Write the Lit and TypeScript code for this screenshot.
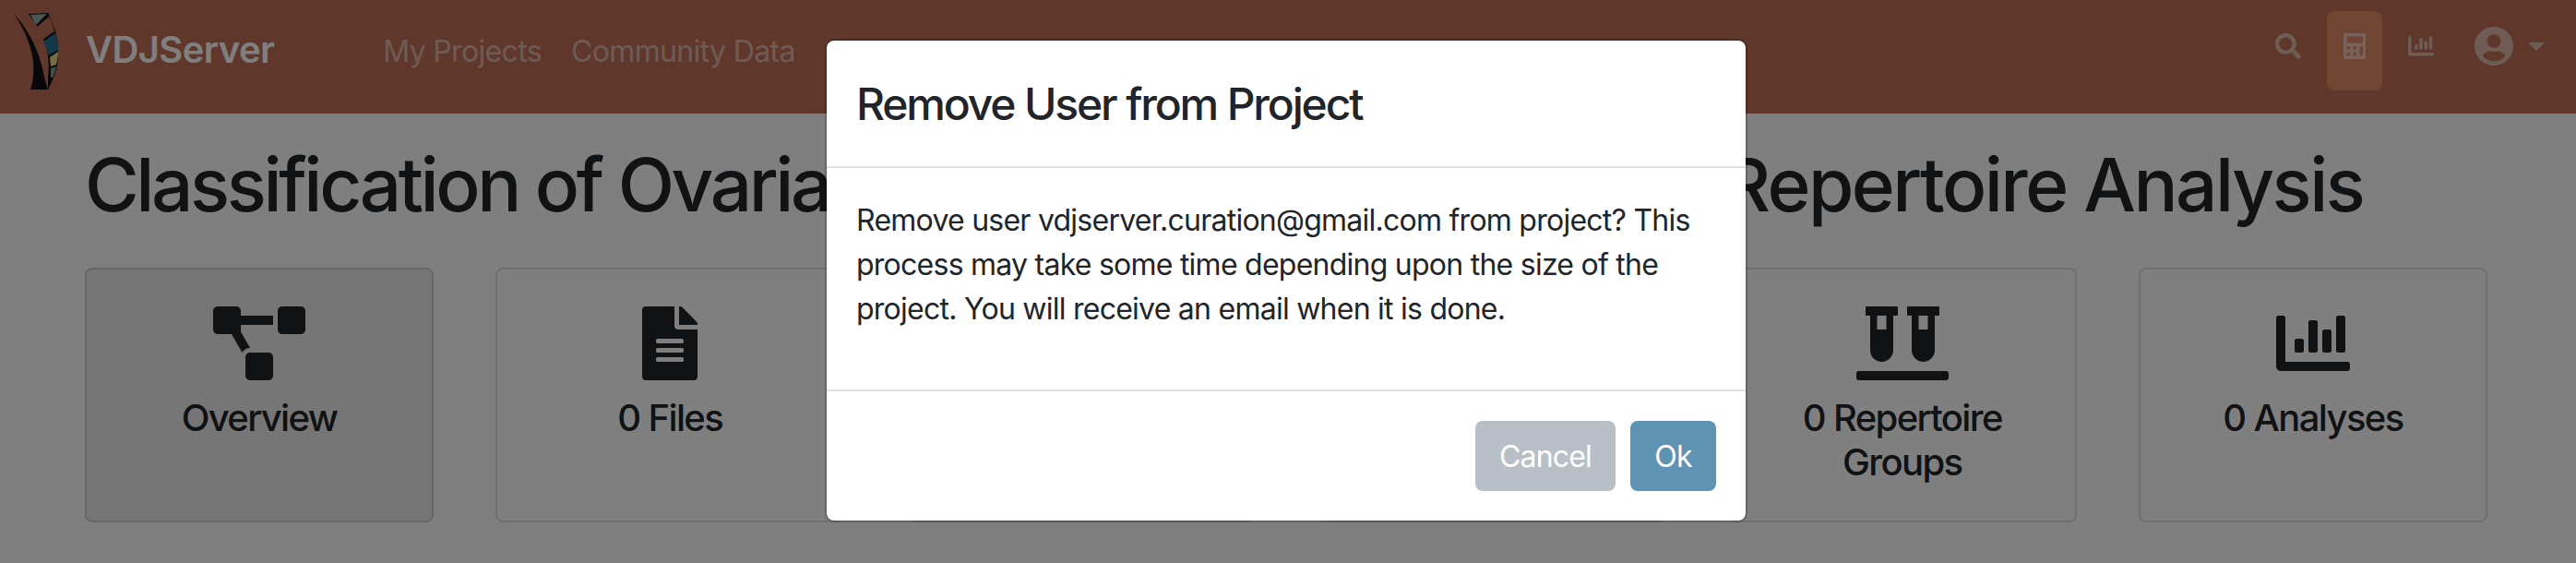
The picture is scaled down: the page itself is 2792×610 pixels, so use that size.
import { LitElement, css, html, svg } from "lit";
import { customElement } from "lit/decorators.js";

const icons = {
    search: ["0 0 512 512", "M505 442.7L405.3 343c-4.5-4.5-10.6-7-17-7H372c27.6-35.3 44-79.7 44-128C416 93.1 322.9 0 208 0S0 93.1 0 208s93.1 208 208 208c48.3 0 92.7-16.4 128-44v16.3c0 6.4 2.5 12.5 7 17l99.7 99.7c9.4 9.4 24.6 9.4 33.9 0l28.3-28.3c9.4-9.4 9.4-24.6.1-34zM208 336c-70.7 0-128-57.2-128-128 0-70.7 57.2-128 128-128 70.7 0 128 57.2 128 128 0 70.7-57.2 128-128 128z"],
    calculator: ["0 0 448 512", "M400 0H48C22.4 0 0 22.4 0 48v416c0 25.6 22.4 48 48 48h352c25.6 0 48-22.4 48-48V48c0-25.6-22.4-48-48-48zM128 435.2c0 6.4-6.4 12.8-12.8 12.8H76.8c-6.4 0-12.8-6.4-12.8-12.8v-38.4c0-6.4 6.4-12.8 12.8-12.8h38.4c6.4 0 12.8 6.4 12.8 12.8v38.4zm0-128c0 6.4-6.4 12.8-12.8 12.8H76.8c-6.4 0-12.8-6.4-12.8-12.8v-38.4c0-6.4 6.4-12.8 12.8-12.8h38.4c6.4 0 12.8 6.4 12.8 12.8v38.4zm128 128c0 6.4-6.4 12.8-12.8 12.8h-38.4c-6.4 0-12.8-6.4-12.8-12.8v-38.4c0-6.4 6.4-12.8 12.8-12.8h38.4c6.4 0 12.8 6.4 12.8 12.8v38.4zm0-128c0 6.4-6.4 12.8-12.8 12.8h-38.4c-6.4 0-12.8-6.4-12.8-12.8v-38.4c0-6.4 6.4-12.8 12.8-12.8h38.4c6.4 0 12.8 6.4 12.8 12.8v38.4zm128 128c0 6.4-6.4 12.8-12.8 12.8h-38.4c-6.4 0-12.8-6.4-12.8-12.8V268.8c0-6.4 6.4-12.8 12.8-12.8h38.4c6.4 0 12.8 6.4 12.8 12.8v166.4zm0-256c0 6.4-6.4 12.8-12.8 12.8H76.8c-6.4 0-12.8-6.4-12.8-12.8V76.8C64 70.4 70.4 64 76.8 64h294.4c6.4 0 12.8 6.4 12.8 12.8v102.4z"],
    chart: ["0 0 512 512", "M332.8 320h38.4c6.4 0 12.8-6.4 12.8-12.8V172.8c0-6.4-6.4-12.8-12.8-12.8h-38.4c-6.4 0-12.8 6.4-12.8 12.8v134.4c0 6.4 6.4 12.8 12.8 12.8zm96 0h38.4c6.4 0 12.8-6.4 12.8-12.8V76.8c0-6.4-6.4-12.8-12.8-12.8h-38.4c-6.4 0-12.8 6.4-12.8 12.8v230.4c0 6.4 6.4 12.8 12.8 12.8zm-288 0h38.4c6.4 0 12.8-6.4 12.8-12.8v-70.4c0-6.4-6.4-12.8-12.8-12.8h-38.4c-6.4 0-12.8 6.4-12.8 12.8v70.4c0 6.4 6.4 12.8 12.8 12.8zm96 0h38.4c6.4 0 12.8-6.4 12.8-12.8V108.8c0-6.4-6.4-12.8-12.8-12.8h-38.4c-6.4 0-12.8 6.4-12.8 12.8v198.4c0 6.4 6.4 12.8 12.8 12.8zM496 384H64V80c0-8.84-7.16-16-16-16H16C7.16 64 0 71.16 0 80v336c0 17.67 14.33 32 32 32h464c8.84 0 16-7.16 16-16v-32c0-8.84-7.16-16-16-16z"],
    user: ["0 8 496 496", "M248 8C111 8 0 119 0 256s111 248 248 248 248-111 248-248S385 8 248 8zm0 96c48.6 0 88 39.4 88 88s-39.4 88-88 88-88-39.4-88-88 39.4-88 88-88zm0 344c-58.7 0-111.3-26.6-146.5-68.2 18.8-35.4 55.6-59.8 98.5-59.8 2.4 0 4.8.4 7.1 1.1 13 4.2 26.6 6.9 40.9 6.9 14.3 0 28-2.7 40.9-6.9 2.3-.7 4.7-1.1 7.1-1.1 42.9 0 79.7 24.4 98.5 59.8C359.3 421.4 306.7 448 248 448z"],
    file: ["0 0 384 512", "M224 136V0H24C10.7 0 0 10.7 0 24v464c0 13.3 10.7 24 24 24h336c13.3 0 24-10.7 24-24V160H248c-13.2 0-24-10.8-24-24zm64 236c0 6.6-5.4 12-12 12H108c-6.6 0-12-5.4-12-12v-8c0-6.6 5.4-12 12-12h168c6.6 0 12 5.4 12 12v8zm0-64c0 6.6-5.4 12-12 12H108c-6.6 0-12-5.4-12-12v-8c0-6.6 5.4-12 12-12h168c6.6 0 12 5.4 12 12v8zm0-72v8c0 6.6-5.4 12-12 12H108c-6.6 0-12-5.4-12-12v-8c0-6.6 5.4-12 12-12h168c6.6 0 12 5.4 12 12zm96-114.1v6.1H256V0h6.1c6.4 0 12.5 2.5 17 7l97.9 98c4.5 4.5 7 10.6 7 16.9z"],
    diagram: ["0 0 640 512", "M384 320H256c-17.67 0-32 14.33-32 32v128c0 17.67 14.33 32 32 32h128c17.67 0 32-14.33 32-32V352c0-17.67-14.33-32-32-32zM192 32c0-17.67-14.33-32-32-32H32C14.33 0 0 14.33 0 32v128c0 17.67 14.33 32 32 32h95.72l73.16 128.04C211.98 300.98 232.4 288 256 288h.28L192 175.51V128h224V64H192V32zM608 0H480c-17.67 0-32 14.33-32 32v128c0 17.67 14.33 32 32 32h128c17.67 0 32-14.33 32-32V32c0-17.67-14.33-32-32-32z"],
    vials: ["0 0 640 512", "M72 64h24v240c0 44.1 35.9 80 80 80s80-35.9 80-80V64h24c4.4 0 8-3.6 8-8V8c0-4.4-3.6-8-8-8H72c-4.4 0-8 3.6-8 8v48c0 4.4 3.6 8 8 8zm72 0h64v96h-64V64zm480 384H16c-8.8 0-16 7.2-16 16v32c0 8.8 7.2 16 16 16h608c8.8 0 16-7.2 16-16v-32c0-8.8-7.2-16-16-16zM360 64h24v240c0 44.1 35.9 80 80 80s80-35.9 80-80V64h24c4.4 0 8-3.6 8-8V8c0-4.4-3.6-8-8-8H360c-4.4 0-8 3.6-8 8v48c0 4.4 3.6 8 8 8zm72 0h64v96h-64V64z"],
};

type IconName = keyof typeof icons;

const icon = (name: IconName, cls: string) => {
    const [box, d] = icons[name];
    return html`<svg class=${cls} viewBox=${box} fill="currentColor">${svg`<path d=${d}></path>`}</svg>`;
};

// cards 3 and 4 sit fully behind the modal
const cards: { icon?: IconName; label?: string; active?: boolean }[] = [
    { icon: "diagram", label: "Overview", active: true },
    { icon: "file", label: "0 Files" },
    {},
    {},
    { icon: "vials", label: "0 Repertoire Groups" },
    { icon: "chart", label: "0 Analyses" },
];

@customElement("app-root")
export class AppRoot extends LitElement {
    static override styles = css`
    :host {
      display: block;
      position: relative;
      height: 610px;
      overflow: hidden;
      background: #fff;
      color: #212529;
      font-family: Inter, "Liberation Sans", sans-serif;
    }
    .navbar {
      display: flex;
      align-items: center;
      height: 123px;
      padding: 0 34px 0 9px;
      background: #bf7056;
    }
    .logo {
      width: 56px;
      height: 90px;
      margin-top: -6px;
      flex: none;
    }
    .brand {
      margin: -16px 0 0 28px;
      font-size: 40px;
      font-weight: 600;
      letter-spacing: -0.6px;
      line-height: 48px;
      color: #fff;
    }
    .links {
      display: flex;
      gap: 32px;
      margin: -12px 0 0 118px;
      font-size: 32px;
      letter-spacing: -0.65px;
      line-height: 48px;
      color: rgba(255, 255, 255, 0.5);
    }
    .tools {
      display: flex;
      align-items: center;
      margin: -13px 0 0 auto;
      color: rgba(255, 255, 255, 0.5);
    }
    .tool {
      display: flex;
      justify-content: center;
      padding: 24px 0 34px;
      width: 60px;
      border-radius: 8px;
    }
    .tool.current {
      background: #e28a68;
    }
    .search-icon, .chart-icon, .calc-icon {
      height: 28px;
      display: block;
    }
    .search-icon { margin: 0 28px 10px 0; }
    .chart-icon { margin: 0 0 10px 28px; }
    .user-icon {
      height: 42px;
      margin: 0 0 10px 44px;
      display: block;
    }
    .caret {
      margin: 0 0 9px 16px;
      border-top: 9px solid currentColor;
      border-left: 9px solid transparent;
      border-right: 9px solid transparent;
    }
    main {
      padding: 0 96px 0 92px;
    }
    h1 {
      margin: 29px 0 0;
      font-size: 80px;
      font-weight: 500;
      letter-spacing: -3.4px;
      line-height: 96px;
      white-space: nowrap;
    }
    h1 .tail {
      margin-left: 9px;
      letter-spacing: -2.55px;
    }
    .cards {
      display: grid;
      grid-template-columns: repeat(6, 378px);
      justify-content: space-between;
      margin-top: 42px;
    }
    .card {
      box-sizing: border-box;
      height: 276px;
      padding: 40px 24px 0;
      border: 2px solid rgba(0, 0, 0, 0.125);
      border-radius: 8px;
      text-align: center;
      font-size: 40px;
      font-weight: 500;
      letter-spacing: -1.6px;
      line-height: 48px;
    }
    .card.active {
      background: #ececec;
    }
    .card-icon {
      display: block;
      height: 80px;
      margin: 0 auto 17px;
      color: #212529;
    }
    .backdrop {
      position: absolute;
      inset: 0;
      background: rgba(0, 0, 0, 0.5);
    }
    .modal {
      position: absolute;
      top: 42px;
      left: 894px;
      box-sizing: border-box;
      width: 1000px;
      height: 524px;
      display: flex;
      flex-direction: column;
      background: #fff;
      border: 2px solid rgba(0, 0, 0, 0.2);
      background-clip: padding-box;
      border-radius: 10px;
    }
    .modal-header {
      height: 136px;
      padding: 0 32px;
      display: flex;
      align-items: center;
      border-bottom: 2px solid #dee2e6;
      font-size: 48px;
      font-weight: 500;
      letter-spacing: -2.15px;
    }
    .modal-body {
      flex: 1;
      padding: 33px 32px 31px;
      font-size: 32px;
      letter-spacing: -0.75px;
      line-height: 48px;
    }
    .modal-footer {
      display: flex;
      justify-content: flex-end;
      gap: 16px;
      padding: 32px;
      border-top: 2px solid #dee2e6;
    }
    button {
      height: 76px;
      padding: 0 24px;
      border: none;
      border-radius: 8px;
      color: #fff;
      font: inherit;
      font-size: 32px;
      letter-spacing: -0.8px;
    }
    .cancel { background: #b9bfc7; width: 152px; }
    .ok { background: #5f93b4; width: 93px; }
  `;

    private _logo() {
        return html`<svg class="logo" viewBox="0 0 56 90">
      <path d="M6 1C18 13 30 34 36 56C39 68 41 78 43 83L24 83C28 72 29 55 24 38C20 24 13 11 6 1Z" fill="#111"/>
      <path d="M22 1L43 0C50 14 55 29 54 45C54 60 49 72 43 83L43 68C45 56 43 40 38 28C34 18 28 9 22 1Z" fill="#111"/>
      <path d="M24 2L42 1L30 13Z" fill="#8eb0a6"/>
      <path d="M31 15L44 4C48 11 49 15 50 20L37 29Z" fill="#bf7056"/>
      <path d="M38 31L51 22C54 30 54 35 54 40L44 46Z" fill="#28708f"/>
      <path d="M45 48L54 42C54 47 53 52 52 56L46 58Z" fill="#e8dc90"/>
      <path d="M46 60L52 58C51 62 50 66 48 70L46 70Z" fill="#7ea294"/>
    </svg>`;
    }

    override render() {
        return html`
      <nav class="navbar">
        ${this._logo()}
        <div class="brand">VDJServer</div>
        <div class="links">
          <span>My Projects</span>
          <span>Community Data</span>
        </div>
        <div class="tools">
          ${icon("search", "search-icon")}
          <div class="tool current">${icon("calculator", "calc-icon")}</div>
          ${icon("chart", "chart-icon")}
          ${icon("user", "user-icon")}
          <div class="caret"></div>
        </div>
      </nav>
      <main>
        <h1>Classification of Ovarian Cancer Through Immune <span class="tail">Repertoire Analysis</span></h1>
        <div class="cards">
          ${cards.map(
            (c) => html`<div class="card ${c.active ? "active" : ""}">
              ${c.icon ? icon(c.icon, "card-icon") : ""}
              ${c.label ?? ""}
            </div>`
        )}
        </div>
      </main>
      <div class="backdrop"></div>
      <div class="modal">
        <div class="modal-header">Remove User from Project</div>
        <div class="modal-body">
          Remove user vdjserver.curation@gmail.com from project? This process may take some time
          depending upon the size of the project. You will receive an email when it is done.
        </div>
        <div class="modal-footer">
          <button class="cancel">Cancel</button>
          <button class="ok">Ok</button>
        </div>
      </div>
    `;
    }
}
